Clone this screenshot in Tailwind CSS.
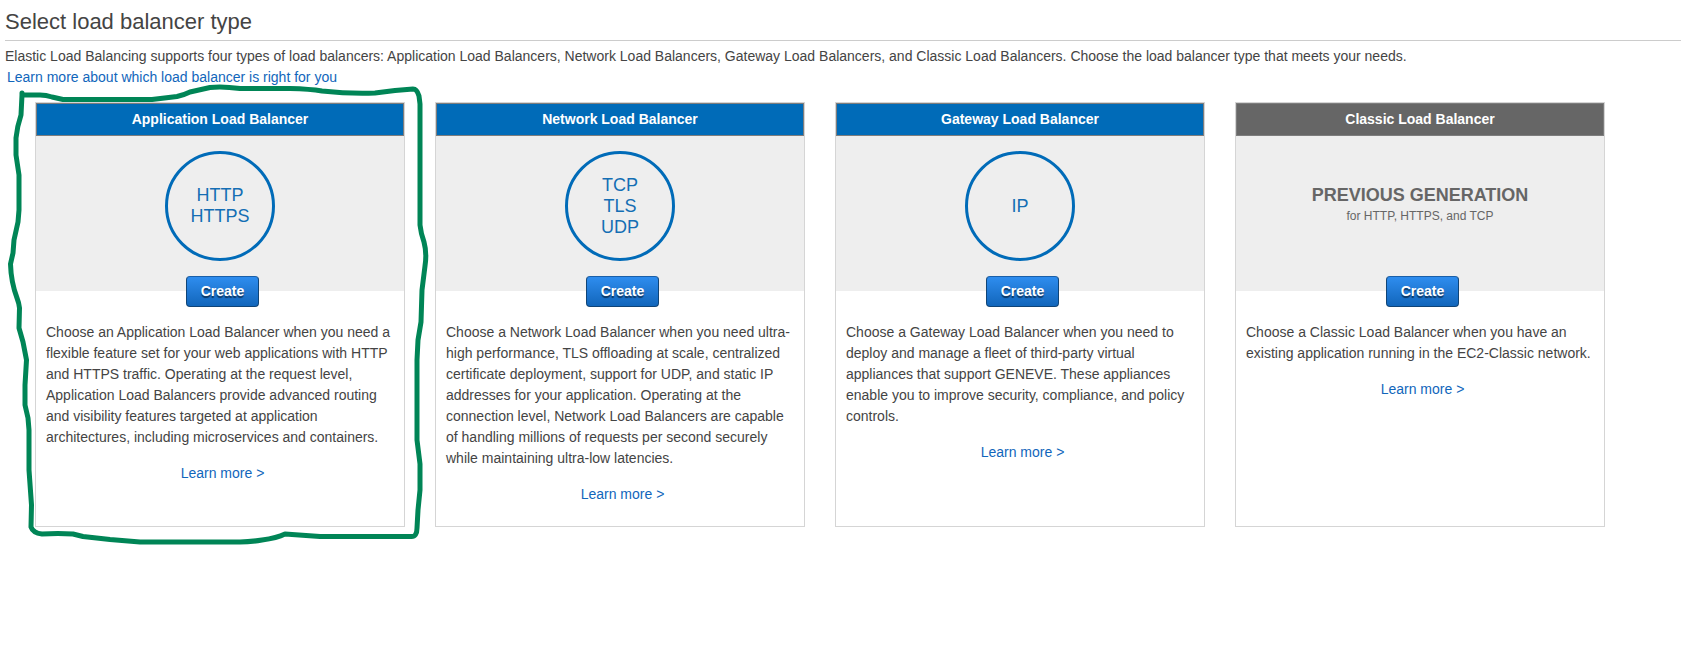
<!DOCTYPE html>
<html lang="en">
<head>
<meta charset="utf-8">
<title>Select load balancer type</title>
<script src="https://cdn.jsdelivr.net/npm/@tailwindcss/browser@4"></script>
</head>
<body class="relative h-[672px] overflow-hidden bg-white font-['Liberation_Sans',Arial,sans-serif] text-sm leading-[21px] text-[#444]">
<header class="ml-[5px]">
  <h1 class="h-[41px] border-b border-[#ccc] pt-[7px] text-[22px] leading-[30px]">Select load balancer type</h1>
  <p class="pt-[5px]">Elastic Load Balancing supports four types of load balancers: Application Load Balancers, Network Load Balancers, Gateway Load Balancers, and Classic Load Balancers. Choose the load balancer type that meets your needs.</p>
  <a class="ml-[2px] block text-[#1166bb]">Learn more about which load balancer is right for you</a>
</header>

<main class="mt-[14px] ml-[35px] flex gap-[30px]">
  <section class="h-[425px] w-[370px] shrink-0 border border-[#d5d5d5]">
    <h2 class="h-[33px] border border-[#7d7d7d] bg-[#006bb8] text-center leading-[31px] font-bold text-white">Application Load Balancer</h2>
    <div class="flex h-[155px] justify-center bg-[#eee] pt-[15px]">
      <div class="flex size-[110px] flex-col items-center justify-center rounded-full border-3 border-[#006bb8] text-lg leading-[21px] text-[#146eb4]"><span>HTTP</span><span>HTTPS</span></div>
    </div>
    <button class="-mt-[15px] ml-[150px] block h-[31px] w-[73px] rounded-[4px] border border-[#0f4477] border-t-[#1a5fa8] bg-linear-to-b from-[#2e8def] to-[#1166bb] font-bold text-white text-shadow-[0_2px_1px_rgb(0_0_0/0.55)]">Create</button>
    <p class="mt-[15px] px-[10px] whitespace-nowrap">Choose an Application Load Balancer when you need a<br>flexible feature set for your web applications with HTTP<br>and HTTPS traffic. Operating at the request level,<br>Application Load Balancers provide advanced routing<br>and visibility features targeted at application<br>architectures, including microservices and containers.</p>
    <a class="mt-[15px] ml-[5px] block text-center text-[#1166bb]">Learn more &gt;</a>
  </section>

  <section class="h-[425px] w-[370px] shrink-0 border border-[#d5d5d5]">
    <h2 class="h-[33px] border border-[#7d7d7d] bg-[#006bb8] text-center leading-[31px] font-bold text-white">Network Load Balancer</h2>
    <div class="flex h-[155px] justify-center bg-[#eee] pt-[15px]">
      <div class="flex size-[110px] flex-col items-center justify-center rounded-full border-3 border-[#006bb8] text-lg leading-[21px] text-[#146eb4]"><span>TCP</span><span>TLS</span><span>UDP</span></div>
    </div>
    <button class="-mt-[15px] ml-[150px] block h-[31px] w-[73px] rounded-[4px] border border-[#0f4477] border-t-[#1a5fa8] bg-linear-to-b from-[#2e8def] to-[#1166bb] font-bold text-white text-shadow-[0_2px_1px_rgb(0_0_0/0.55)]">Create</button>
    <p class="mt-[15px] px-[10px] whitespace-nowrap">Choose a Network Load Balancer when you need ultra-<br>high performance, TLS offloading at scale, centralized<br>certificate deployment, support for UDP, and static IP<br>addresses for your application. Operating at the<br>connection level, Network Load Balancers are capable<br>of handling millions of requests per second securely<br>while maintaining ultra-low latencies.</p>
    <a class="mt-[15px] ml-[5px] block text-center text-[#1166bb]">Learn more &gt;</a>
  </section>

  <section class="h-[425px] w-[370px] shrink-0 border border-[#d5d5d5]">
    <h2 class="h-[33px] border border-[#7d7d7d] bg-[#006bb8] text-center leading-[31px] font-bold text-white">Gateway Load Balancer</h2>
    <div class="flex h-[155px] justify-center bg-[#eee] pt-[15px]">
      <div class="flex size-[110px] flex-col items-center justify-center rounded-full border-3 border-[#006bb8] text-lg leading-[21px] text-[#146eb4]"><span>IP</span></div>
    </div>
    <button class="-mt-[15px] ml-[150px] block h-[31px] w-[73px] rounded-[4px] border border-[#0f4477] border-t-[#1a5fa8] bg-linear-to-b from-[#2e8def] to-[#1166bb] font-bold text-white text-shadow-[0_2px_1px_rgb(0_0_0/0.55)]">Create</button>
    <p class="mt-[15px] px-[10px] whitespace-nowrap">Choose a Gateway Load Balancer when you need to<br>deploy and manage a fleet of third-party virtual<br>appliances that support GENEVE. These appliances<br>enable you to improve security, compliance, and policy<br>controls.</p>
    <a class="mt-[15px] ml-[5px] block text-center text-[#1166bb]">Learn more &gt;</a>
  </section>

  <section class="h-[425px] w-[370px] shrink-0 border border-[#d5d5d5]">
    <h2 class="h-[33px] border border-[#7d7d7d] bg-[#666] text-center leading-[31px] font-bold text-white">Classic Load Balancer</h2>
    <div class="flex h-[155px] flex-col items-center bg-[#eee] pt-[49px] text-[#666]">
      <span class="text-lg leading-[21px] font-bold">PREVIOUS GENERATION</span>
      <span class="text-xs leading-[21px]">for HTTP, HTTPS, and TCP</span>
    </div>
    <button class="-mt-[15px] ml-[150px] block h-[31px] w-[73px] rounded-[4px] border border-[#0f4477] border-t-[#1a5fa8] bg-linear-to-b from-[#2e8def] to-[#1166bb] font-bold text-white text-shadow-[0_2px_1px_rgb(0_0_0/0.55)]">Create</button>
    <p class="mt-[15px] px-[10px] whitespace-nowrap">Choose a Classic Load Balancer when you have an<br>existing application running in the EC2-Classic network.</p>
    <a class="mt-[15px] ml-[5px] block text-center text-[#1166bb]">Learn more &gt;</a>
  </section>
</main>

<!-- hand-drawn highlight around the first card -->
<svg class="pointer-events-none absolute top-0 left-0" width="450" height="560" viewBox="0 0 450 560" fill="none" stroke="#008556" stroke-width="5" stroke-linecap="round" stroke-linejoin="round">
  <path d="M22 93V95L40 95Q46 95 52 97L63 99.500H152L177 96.500Q184 95 190 92L210 87.500Q222 86 240 88.500L290 88.500Q310 89 322 91Q350 94 375 93L395 90.500L413 89Q417 89 419 96L420 104V225Q421 234 424 242Q427 253 425 266L422 290L421 322L418 340L417 360V440L420 464V490L418 510L417 528Q417 537 411 536.500H320L285 534Q277 538 262 540Q250 542 240 542H140L110 539.500L83 536.500L73 534Q58 533 42 534Q33 533 31 527L31.500 505L29 470V430L28 418L25 405V385L26.500 360L23 342L19 328L19.500 308Q19 303 17 298Q11 282 10.500 264L13 253L14 240L18 222L19 210V175L16 155V138Q17 127 21 115L22 95"/>
</svg>
</body>
</html>
